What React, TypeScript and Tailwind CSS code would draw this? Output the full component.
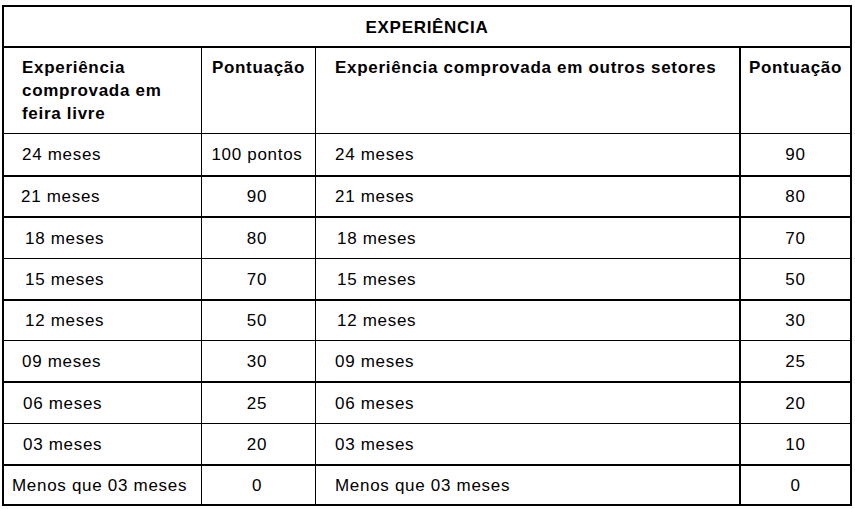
import React from "react";

type Row = {
  a: string;
  b: string;
  c: string;
  d: string;
  rowCls: string;
  padA: string;
  padC: string;
};

const rows: Row[] = [
  { a: "24 meses", b: "100 pontos", c: "24 meses", d: "90", rowCls: "h-[43px] border-b-2", padA: "pl-[18px]", padC: "pl-[19px]" },
  { a: "21 meses", b: "90", c: "21 meses", d: "80", rowCls: "h-[41px] border-b-2", padA: "pl-[17px]", padC: "pl-[19px]" },
  { a: "18 meses", b: "80", c: "18 meses", d: "70", rowCls: "h-[41px] border-b", padA: "pl-[21px]", padC: "pl-[21px]" },
  { a: "15 meses", b: "70", c: "15 meses", d: "50", rowCls: "h-[42px] border-b-2", padA: "pl-[21px]", padC: "pl-[21px]" },
  { a: "12 meses", b: "50", c: "12 meses", d: "30", rowCls: "h-[40px] border-b", padA: "pl-[21px]", padC: "pl-[21px]" },
  { a: "09 meses", b: "30", c: "09 meses", d: "25", rowCls: "h-[42px] border-b-2", padA: "pl-[18px]", padC: "pl-[19px]" },
  { a: "06 meses", b: "25", c: "06 meses", d: "20", rowCls: "h-[41px] border-b", padA: "pl-[19px]", padC: "pl-[19px]" },
  { a: "03 meses", b: "20", c: "03 meses", d: "10", rowCls: "h-[42px] border-b-2", padA: "pl-[19px]", padC: "pl-[19px]" },
  { a: "Menos que 03 meses", b: "0", c: "Menos que 03 meses", d: "0", rowCls: "h-[38px]", padA: "pl-[8px]", padC: "pl-[19px]" },
];

export default function App() {
  return (
    <div
      className="w-[855px] h-[509px] bg-white text-black pt-[5px] pl-[2px]"
      style={{ fontFamily: '"Liberation Sans", Arial, sans-serif' }}
    >
      <div className="w-[850px] h-[501px] border-2 border-black flex flex-col text-[17px] leading-[23px] tracking-[0.7px]">
        <div className="h-[41px] border-b-2 border-black flex items-center justify-center font-bold pt-[2px]">
          EXPERIÊNCIA
        </div>
        <div className="h-[86px] border-b border-black flex font-bold">
          <div className="w-[198px] border-r border-black pl-[18px] pr-[4px] pt-[8px]">
            Experiência comprovada em feira livre
          </div>
          <div className="w-[114px] border-r border-black text-center pt-[8px]">Pontuação</div>
          <div className="w-[425px] border-r-2 border-black pl-[19px] pt-[8px]">
            Experiência comprovada em outros setores
          </div>
          <div className="flex-1 text-center pt-[8px]">Pontuação</div>
        </div>
        {rows.map((r, i) => (
          <div key={i} className={`flex border-black ${r.rowCls}`}>
            <div className={`w-[198px] border-r border-black flex items-center whitespace-nowrap ${r.padA}`}>{r.a}</div>
            <div className="w-[114px] border-r border-black flex items-center justify-center pr-[3px]">{r.b}</div>
            <div className={`w-[425px] border-r-2 border-black flex items-center ${r.padC}`}>{r.c}</div>
            <div className="flex-1 flex items-center justify-center">{r.d}</div>
          </div>
        ))}
      </div>
    </div>
  );
}
